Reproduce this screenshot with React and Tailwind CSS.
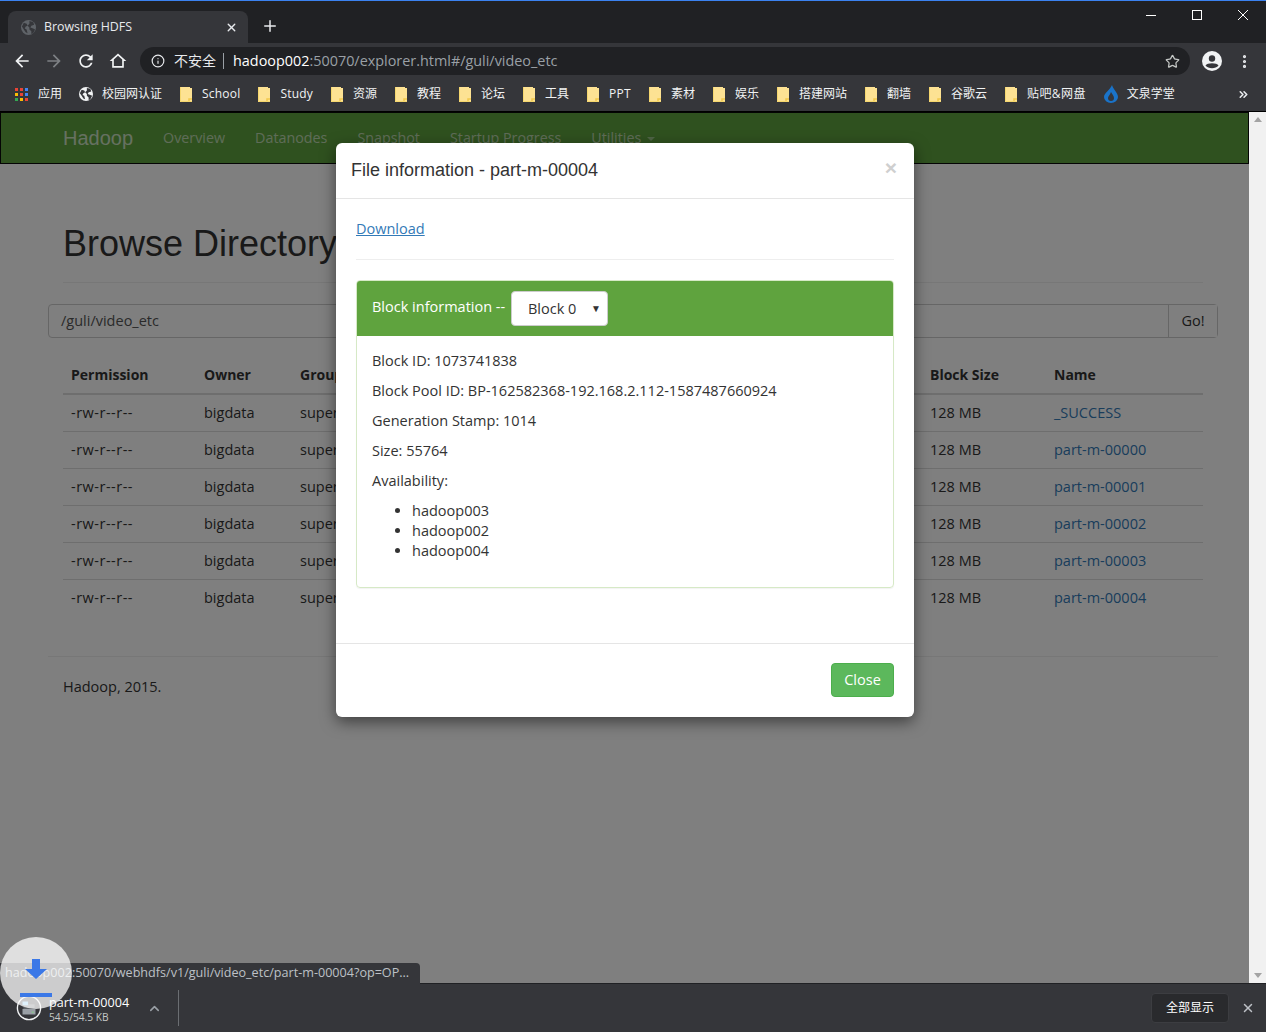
import React from "react";
import { Info, Star, MoreVertical, Plus, X, ChevronUp, ChevronsRight } from "lucide-react";

const UI_FONT = "font-['Open_Sans','Noto_Sans_CJK_SC',sans-serif]";
const BODY_FONT = "font-['Open_Sans',sans-serif] text-[14.5px]";
const TITLE_FONT = "font-['Liberation_Sans',sans-serif]";

const bookmarks = [
  { label: "School", cls: "tracking-[0.2px]" },
  { label: "Study", cls: "tracking-[0.2px]" },
  { label: "资源" },
  { label: "教程" },
  { label: "论坛" },
  { label: "工具" },
  { label: "PPT", cls: "tracking-[0.3px]" },
  { label: "素材" },
  { label: "娱乐" },
  { label: "搭建网站" },
  { label: "翻墙" },
  { label: "谷歌云" },
  { label: "贴吧&网盘", cls: "tracking-[0.4px]" },
];

const rows = ["_SUCCESS", "part-m-00000", "part-m-00001", "part-m-00002", "part-m-00003", "part-m-00004"];

function Folder() {
  return (
    <svg width="12" height="15" viewBox="0 0 12 15" className="mr-[10px] shrink-0">
      <path d="M0 0h10v1h2v14H0z" fill="#fde293" />
      <path d="M9 15v-3h3" fill="none" stroke="#f2c94c" strokeWidth="1.5" />
      <path d="M.5 0v14.5H12" fill="none" stroke="#f5d76e" />
    </svg>
  );
}

function AppsGrid() {
  const colors = ["#ea4335", "#ea4335", "#4285f4", "#fbbc05", "#ea4335", "#4285f4", "#34a853", "#fbbc05", "#ea4335"];
  return (
    <div className="grid grid-cols-3 gap-[2px] w-[13px] h-[13px] mr-[10px]">
      {colors.map((c, i) => (
        <div key={i} className="w-[3px] h-[3px]" style={{ background: c }} />
      ))}
    </div>
  );
}

function Globe({ size, color, line }) {
  return (
    <svg width={size} height={size} viewBox="0 0 16 16" className="shrink-0">
      <circle cx="8" cy="8" r="8" fill={color} />
      <path d="M3 3l3 1 1 2-2 1-1 2 2 1 1 4-2-1-2-3-2-3zM9 1l4 1 1 3-3 1-1 2 3 1 2 1-2 4-2 1 0-3-2-2 0-2-2-2 2-2z" fill={line} />
    </svg>
  );
}

function NavIcon({ d, color }) {
  return (
    <svg width="20" height="20" viewBox="0 0 24 24" fill={color} className="shrink-0">
      <path d={d} />
    </svg>
  );
}

function WindowControls() {
  return (
    <div className="ml-auto self-start mt-[9px] mr-[18px] flex items-center gap-[36px]">
      <svg width="10" height="10" viewBox="0 0 10 10" shapeRendering="crispEdges">
        <path d="M0 5.5h10" stroke="#fff" />
      </svg>
      <svg width="10" height="10" viewBox="0 0 10 10" shapeRendering="crispEdges">
        <rect x=".5" y=".5" width="9" height="9" fill="none" stroke="#fff" />
      </svg>
      <svg width="10" height="10" viewBox="0 0 10 10">
        <path d="M0 0l10 10M10 0L0 10" stroke="#fff" />
      </svg>
    </div>
  );
}

function TitleBar() {
  return (
    <div className="h-[43px] bg-[#202124] border-t border-[#3b82f0] flex items-end shrink-0">
      <div className="ml-[8px] w-[240px] h-[32px] bg-[#35363a] rounded-t-[8px] flex items-center pl-[13px] pr-[10px]">
        <Globe size={15} color="#5f6368" line="#35363a" />
        <span className={`ml-[8px] text-[12.4px] text-[#e8eaed] flex-1 ${UI_FONT}`}>Browsing HDFS</span>
        <X size={13} strokeWidth={2.5} color="#e8eaed" />
      </div>
      <div className="ml-[13px] h-[32px] pb-[2px] flex items-center">
        <Plus size={18} strokeWidth={2} color="#e8eaed" />
      </div>
      <WindowControls />
    </div>
  );
}

function Toolbar() {
  return (
    <div className="h-[37px] bg-[#35363a] flex items-center pl-[12px] pb-[1px] shrink-0">
      <div className="flex items-center gap-[12px]">
        <NavIcon color="#f1f3f4" d="M20 11H7.83l5.59-5.59L12 4l-8 8 8 8 1.41-1.41L7.83 13H20v-2z" />
        <NavIcon color="#7d8084" d="M4 11h12.17l-5.59-5.59L12 4l8 8-8 8-1.41-1.41L16.17 13H4v-2z" />
        <NavIcon color="#f1f3f4" d="M17.65 6.35C16.2 4.9 14.21 4 12 4c-4.42 0-7.99 3.58-7.99 8s3.57 8 7.99 8c3.73 0 6.84-2.55 7.73-6h-2.08c-.82 2.33-3.04 4-5.65 4-3.31 0-6-2.69-6-6s2.69-6 6-6c1.66 0 3.14.69 4.22 1.78L13 11h7V4l-2.35 2.35z" />
        <NavIcon color="#f1f3f4" d="M12 5.69l5 4.5V18H7v-7.81l5-4.5M12 3L2 12h3v8h14v-8h3L12 3z" />
      </div>
      <div className="ml-[12px] w-[1050px] h-[28px] bg-[#202124] rounded-full flex items-center pl-[11px] pr-[10px]">
        <Info size={14} color="#e8eaed" strokeWidth={2} />
        <span className={`ml-[9px] -mt-[2px] text-[14px] text-[#e8eaed] ${UI_FONT}`}>不安全</span>
        <span className="ml-[7px] w-px h-[16px] bg-[#9aa0a6]" />
        <span className={`ml-[9px] text-[14.4px] text-white flex-1 ${UI_FONT}`}>
          hadoop002<span className="text-[#9aa0a6]">:50070/explorer.html#/guli/video_etc</span>
        </span>
        <Star size={15} color="#c4c7c5" strokeWidth={2} />
      </div>
      <svg width="20" height="20" viewBox="0 0 20 20" className="ml-[12px]">
        <circle cx="10" cy="10" r="10" fill="#f1f3f4" />
        <circle cx="10" cy="7.5" r="3.2" fill="#35363a" />
        <path d="M3.5 14.5c1.5-3 11.5-3 13 0-3 3.5-10 3.5-13 0z" fill="#35363a" />
      </svg>
      <MoreVertical size={17} color="#e8eaed" strokeWidth={2.5} className="ml-[14px]" />
    </div>
  );
}

function BookmarksBar() {
  return (
    <div className={`h-[32px] bg-[#35363a] border-b border-black flex items-center pl-[15px] pb-[3px] text-[12px] text-[#f1f3f4] shrink-0 ${UI_FONT}`}>
      <AppsGrid />
      <span>应用</span>
      <div className="flex items-center ml-[17px]">
        <span className="mr-[9px]"><Globe size={14} color="#f1f3f4" line="#35363a" /></span>
        <span>校园网认证</span>
      </div>
      <div className="flex items-center gap-[18px] ml-[18px]">
        {bookmarks.map((b) => (
          <div key={b.label} className="flex items-center">
            <Folder />
            <span className={b.cls}>{b.label}</span>
          </div>
        ))}
        <div className="flex items-center">
          <svg width="14" height="18" viewBox="0 0 14 18" className="mr-[9px]">
            <path d="M8 0c1 4 6 8 6 12a7 6 0 0 1-14 0C0 8 6 5 8 0z" fill="#1a73c8" />
            <path d="M7 7c1 2 3 4 3 6a3 3 0 0 1-6 0c0-2 2-3 3-6z" fill="#35363a" />
          </svg>
          <span>文泉学堂</span>
        </div>
      </div>
      <ChevronsRight size={13} strokeWidth={3} color="#e8eaed" className="ml-auto mr-[16px]" />
    </div>
  );
}

function Navbar() {
  return (
    <div className="h-[52px] bg-[#5fa33e] border border-[#080808] flex items-center pl-[62px] shrink-0">
      <span className={`text-[20px] text-white/70 ${TITLE_FONT}`}>Hadoop</span>
      <div className="flex items-center gap-[30px] ml-[30px] text-[14.3px] text-white/60">
        <span>Overview</span>
        <span>Datanodes</span>
        <span>Snapshot</span>
        <span>Startup Progress</span>
        <span className="flex items-center">
          Utilities
          <span className="ml-[6px] mt-[2px] border-x-[4px] border-x-transparent border-t-[4px] border-t-white/40" />
        </span>
      </div>
    </div>
  );
}

function Page() {
  return (
    <div className={`${BODY_FONT} text-[#333] leading-[22px]`}>
      <Navbar />
      <div className="px-[48px]">
        <div className="ml-[15px] mt-[60px] w-[1140px] h-[59px] border-b border-[#eee]">
          <h1 className={`text-[36px] leading-[40px] ${TITLE_FONT}`}>Browse Directory</h1>
        </div>
        <div className="mt-[21px] h-[34px] border border-[#ccc] rounded-[4px] flex items-center bg-white w-[1170px]">
          <span className="flex-1 pl-[12px] text-[#555]">/guli/video_etc</span>
          <span className="w-[49px] h-full border-l border-[#ccc] bg-white flex items-center justify-center">Go!</span>
        </div>
        <table className="ml-[15px] w-[1140px] table-fixed border-collapse">
          <thead>
            <tr className="h-[56px] border-b-2 border-[#ddd] font-bold text-left text-[14px]">
              <th className="w-[141px] pl-[8px] pt-[19px]">Permission</th>
              <th className="w-[96px] pt-[19px]">Owner</th>
              <th className="w-[630px] pt-[19px]">Group</th>
              <th className="w-[124px] pt-[19px]">Block Size</th>
              <th className="pt-[19px]">Name</th>
            </tr>
          </thead>
          <tbody>
            {rows.map((name) => (
              <tr key={name} className="h-[37px] border-b border-[#ddd] last:border-b-0">
                <td className="pl-[8px] tracking-[0.5px]">-rw-r--r--</td>
                <td>bigdata</td>
                <td>supergroup</td>
                <td>128 MB</td>
                <td className="text-[#337ab7]">{name}</td>
              </tr>
            ))}
          </tbody>
        </table>
        <div className="mt-[40px] border-t border-[#eee] pt-[19px] pl-[15px] w-[1170px]">Hadoop, 2015.</div>
      </div>
    </div>
  );
}

function Modal() {
  return (
    <div className={`absolute left-[336px] top-[31px] w-[578px] h-[574px] bg-white rounded-[6px] shadow-[0_5px_15px_rgba(0,0,0,0.5)] flex flex-col ${BODY_FONT} text-[#333] leading-[22px]`}>
      <div className="h-[56px] border-b border-[#e5e5e5] flex items-center justify-between pl-[15px] pr-[17px] pb-[2px] shrink-0">
        <span className={`text-[18px] ${TITLE_FONT}`}>File information - part-m-00004</span>
        <span className={`text-[21px] font-bold text-[#cfcfcf] -mt-[3px] ${TITLE_FONT}`}>×</span>
      </div>
      <div className="flex-1 px-[20px] pt-[19px]">
        <a className="text-[#337ab7] underline">Download</a>
        <div className="mt-[19px] border-t border-[#eee]" />
        <div className="mt-[20px] border border-[#d6e9c6] rounded-[4px] h-[308px] shadow-[0_1px_1px_rgba(0,0,0,0.05)]">
          <div className="h-[55px] bg-[#5fa33e] rounded-t-[3px] flex items-center pl-[15px] text-white">
            <span className="w-[139px] -mt-[3px] whitespace-nowrap">Block information --</span>
            <div className="w-[97px] h-[35px] bg-white rounded-[4px] border border-[#ccc] flex items-center pl-[16px] pr-[6px] justify-between text-[#333]">
              <span>Block 0</span>
              <span className="text-[10px] -mt-[2px]">▼</span>
            </div>
          </div>
          <div className="pt-[14px] pl-[15px] flex flex-col gap-[8px]">
            <p>Block ID: 1073741838</p>
            <p>Block Pool ID: BP-162582368-192.168.2.112-1587487660924</p>
            <p>Generation Stamp: 1014</p>
            <p>Size: 55764</p>
            <p>Availability:</p>
            <ul className="list-disc pl-[40px] pt-[1px] leading-[20px]">
              <li>hadoop003</li>
              <li>hadoop002</li>
              <li>hadoop004</li>
            </ul>
          </div>
        </div>
      </div>
      <div className="h-[74px] border-t border-[#e5e5e5] flex items-center justify-end pr-[20px] pb-[2px] shrink-0">
        <button className="w-[63px] h-[34px] bg-[#5cb85c] border border-[#4cae4c] rounded-[4px] text-white">Close</button>
      </div>
    </div>
  );
}

function Scrollbar() {
  return (
    <div className="w-[17px] bg-[#f1f1f1] flex flex-col items-center justify-between py-[5px] shrink-0">
      <span className="border-x-[4px] border-x-transparent border-b-[5px] border-b-[#a3a3a3]" />
      <span className="border-x-[4px] border-x-transparent border-t-[5px] border-t-[#a3a3a3]" />
    </div>
  );
}

function DownloadBar() {
  return (
    <div className={`h-[49px] bg-[#35363a] border-t border-[#202124] flex items-center relative shrink-0 ${UI_FONT}`}>
      <svg width="26" height="26" viewBox="0 0 28 28" className="ml-[16px] shrink-0">
        <circle cx="14" cy="14" r="12.5" fill="none" stroke="#f1f3f4" strokeWidth="1.5" />
        <rect x="7" y="15" width="14" height="6" fill="#9aa0a6" />
        <rect x="8" y="10" width="12" height="5" fill="#5f6368" />
        <rect x="7" y="7" width="6" height="4" fill="#7cc4f0" />
        <rect x="17" y="18" width="2" height="1" fill="#7fdc7f" />
      </svg>
      <div className="ml-[7px] w-[90px] flex flex-col leading-[14px] pt-[3px]">
        <span className="text-[12.6px] text-white">part-m-00004</span>
        <span className="text-[10.2px] text-[#c4c7c5]">54.5/54.5 KB</span>
      </div>
      <ChevronUp size={15} strokeWidth={2.5} color="#9aa0a6" className="ml-[8px]" />
      <div className="ml-[16px] w-px h-[36px] bg-[#6b6e72]" />
      <div className="ml-auto w-[78px] h-[30px] bg-[#292a2d] border border-[#3c3d41] rounded-[4px] flex items-center justify-center text-[12px] text-white">
        全部显示
      </div>
      <X size={14} strokeWidth={2.5} color="#bdc1c6" className="ml-[12px] mr-[11px]" />
      <div className="absolute left-0 bottom-[48px] w-[420px] h-[21px] bg-[#35363a] rounded-tr-[4px] pl-[5px] flex items-center text-[12.6px] text-[#bdc1c6] whitespace-nowrap">
        hadoop002:50070/webhdfs/v1/guli/video_etc/part-m-00004?op=OP...
      </div>
      <div className="absolute left-0 top-[-47px] w-[72px] h-[72px] rounded-full bg-white/75 flex flex-col items-center">
        <svg width="32" height="38" viewBox="0 0 32 38" className="mt-[22px]">
          <path d="M12 0h8v10h7L16 20 5 10h7z" fill="#3b78e7" />
          <rect x="0" y="34" width="32" height="4" fill="#3b78e7" />
        </svg>
      </div>
    </div>
  );
}

export default function App() {
  return (
    <div className="w-[1266px] h-[1032px] flex flex-col overflow-hidden bg-white">
      <TitleBar />
      <Toolbar />
      <BookmarksBar />
      <div className="flex-1 flex min-h-0">
        <div className="relative w-[1249px] bg-white overflow-hidden">
          <Page />
          <div className="absolute inset-0 bg-black/50" />
          <Modal />
        </div>
        <Scrollbar />
      </div>
      <DownloadBar />
    </div>
  );
}
